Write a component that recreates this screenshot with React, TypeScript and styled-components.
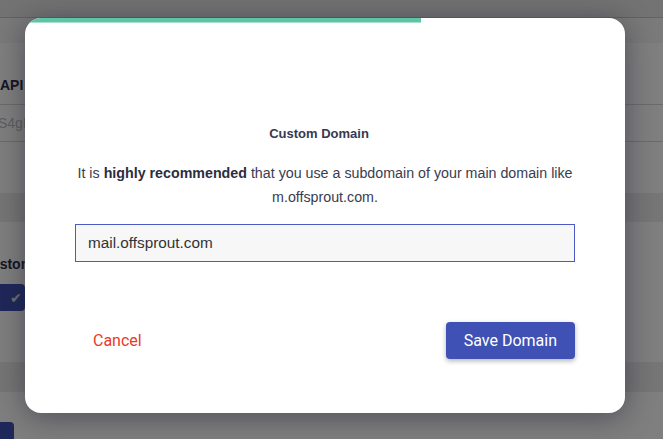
import styled, { createGlobalStyle } from 'styled-components';

const GlobalStyle = createGlobalStyle`
  html, body {
    margin: 0;
    padding: 0;
    width: 663px;
    height: 439px;
    overflow: hidden;
    font-family: 'Liberation Sans', Arial, sans-serif;
  }
`;

const Page = styled.div`
  position: relative;
  width: 663px;
  height: 439px;
  overflow: hidden;
  background: #fff;
`;

const TopBar = styled.div`
  height: 17px;
  background: #e6e6e6;
  border-bottom: 1px solid #c4c4c4;
`;

const Band = styled.div<{ $h: number; $bg?: string; $line?: boolean }>`
  height: ${(p) => p.$h}px;
  background: ${(p) => p.$bg || '#fff'};
  border-bottom: ${(p) => (p.$line ? '1px solid #d6d6d6' : 'none')};
  display: flex;
  align-items: center;
  box-sizing: border-box;
`;

const Label = styled.span<{ $shift?: number }>`
  font-weight: bold;
  font-size: 14px;
  color: #2b2d42;
  margin-left: ${(p) => p.$shift || 0}px;
  margin-top: 22px;
  white-space: nowrap;
`;

const KeyText = styled.span`
  font-size: 14px;
  color: #bdbdbd;
  margin-left: -2px;
  white-space: nowrap;
`;

const ActiveButton = styled.div<{ $w: number }>`
  width: ${(p) => p.$w}px;
  height: 27px;
  background: #3f51b5;
  border-radius: 0 4px 4px 0;
  display: flex;
  align-items: center;
  justify-content: flex-end;
  padding-right: 3px;
  box-sizing: border-box;
  color: #e0e0e0;
  font-size: 14px;
`;

const Overlay = styled.div`
  position: absolute;
  inset: 0;
  background: rgba(0, 0, 0, 0.5);
`;

const Modal = styled.div`
  position: absolute;
  left: 25px;
  top: 18px;
  width: 600px;
  height: 395px;
  background: #fff;
  border-radius: 16px;
  overflow: hidden;
  box-shadow: 0 4px 30px rgba(20, 20, 40, 0.45);
  display: flex;
  flex-direction: column;
  align-items: center;
`;

const Progress = styled.div`
  align-self: stretch;
  height: 5px;
`;

const ProgressFill = styled.div<{ $pct: number }>`
  height: 4px;
  width: ${(p) => p.$pct}%;
  background: #5ec4a5;
  border-bottom: 1px solid #a8e0cf;
`;

const Title = styled.h3`
  margin: 103px 12px 0 0;
  font-size: 13px;
  font-weight: bold;
  color: #363a4f;
  line-height: 16px;
`;

const Text = styled.p`
  margin: 19px 0 0;
  width: 510px;
  text-align: center;
  font-size: 14.25px;
  line-height: 24px;
  color: #3a3c50;

  b {
    color: #2b2d40;
  }
`;

const Input = styled.input`
  margin-top: 15px;
  width: 500px;
  height: 38px;
  box-sizing: border-box;
  border: 1px solid #4a5ac6;
  background: #f7f7f7;
  padding: 0 12px;
  font-family: 'Liberation Sans', Arial, sans-serif;
  font-size: 15.3px;
  color: #333;
  outline: none;
`;

const Actions = styled.div`
  margin-top: 60px;
  width: 500px;
  display: flex;
  justify-content: space-between;
  align-items: center;
`;

const CancelButton = styled.button`
  border: none;
  background: none;
  font-family: Roboto, 'Liberation Sans', sans-serif;
  font-size: 16px;
  color: #e8392b;
  padding: 0 18px;
  height: 37px;
  cursor: pointer;
`;

const SaveButton = styled.button`
  border: none;
  background: #3f51b5;
  color: #fff;
  font-family: Roboto, 'Liberation Sans', sans-serif;
  font-size: 16px;
  font-weight: 400;
  height: 37px;
  padding: 0 18px;
  border-radius: 4px;
  box-shadow: 0 2px 5px rgba(0, 0, 0, 0.3);
  cursor: pointer;
`;

const App = () => {
  return (
    <Page>
      <GlobalStyle />
      <TopBar />
      <Band $h={25} $bg="#f4f4f4" />
      <Band $h={62} $line>
        <Label>API Key</Label>
      </Band>
      <Band $h={37} $line>
        <KeyText>S4gK2h7xLmP0qZ</KeyText>
      </Band>
      <Band $h={51} />
      <Band $h={29} $bg="#ececec" />
      <Band $h={62}>
        <Label $shift={-19}>Custom Domain</Label>
      </Band>
      <ActiveButton $w={25}>✔</ActiveButton>
      <Band $h={51} />
      <Band $h={30} $bg="#ececec" />
      <Band $h={30} />
      <ActiveButton $w={14} />

      <Overlay />
      <Modal>
        <Progress>
          <ProgressFill $pct={66} />
        </Progress>
        <Title>Custom Domain</Title>
        <Text>
          It is <b>highly recommended</b> that you use a subdomain of your main domain like m.offsprout.com.
        </Text>
        <Input defaultValue="mail.offsprout.com" />
        <Actions>
          <CancelButton>Cancel</CancelButton>
          <SaveButton>Save Domain</SaveButton>
        </Actions>
      </Modal>
    </Page>
  );
};

export default App;
